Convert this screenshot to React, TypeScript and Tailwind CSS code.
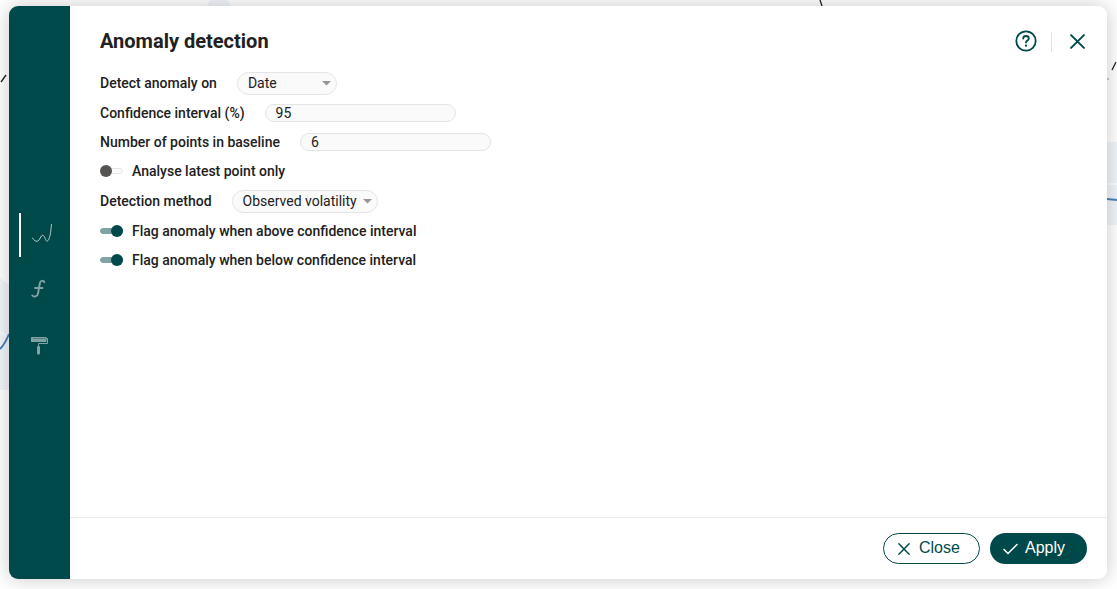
import { useState, type ReactNode } from "react";

const iconClass = "block shrink-0";

function TrendIcon() {
  return (
    <svg className={iconClass} width="22" height="22" viewBox="0 0 22 22" fill="none" stroke="#b5c9ca" strokeWidth="1" strokeLinecap="round">
      <path d="M1.500 14C2.500 16 4.500 17.700 6.500 17.200C9 16.500 9.500 11.300 11.700 11.300C14 11.500 14.500 17.500 16.300 17.200C18.500 16 20 9 20.500 -1" />
    </svg>
  );
}

function FunctionIcon() {
  return (
    <svg className={iconClass} width="22" height="22" viewBox="0 0 22 22" fill="none" stroke="#7fa3a4" strokeWidth="1.9" strokeLinecap="round">
      <path d="M13.300 3.200C12.600 1.300 9.500 1.200 8.900 4L7 14.500C6.400 17.800 2.800 18.400 1.300 16.500M4 9H11.500" />
    </svg>
  );
}

function RollerIcon() {
  return (
    <svg className={iconClass} width="22" height="22" viewBox="0 0 22 22" fill="none">
      <rect x="0" y="3" width="15.500" height="5" rx="0.500" fill="#7fa3a4" />
      <path d="M2 4.500H15" stroke="#4d7f80" />
      <path d="M15 4.500H16.500V9.500H7.500V12" stroke="#7fa3a4" />
      <rect x="6" y="12" width="3" height="8.500" rx="1" fill="#7fa3a4" />
    </svg>
  );
}

function CrossIcon({ size, weight }: { size: number; weight: number }) {
  return (
    <svg className={iconClass} width={size} height={size} viewBox="0 0 14 14" stroke="currentColor" strokeWidth={weight} strokeLinecap="round">
      <path d="M1 1L13 13M13 1L1 13" />
    </svg>
  );
}

function SideTab({ label, active, onClick, children }: { label: string; active: boolean; onClick: () => void; children: ReactNode }) {
  return (
    <button
      type="button"
      aria-label={label}
      aria-pressed={active}
      onClick={onClick}
      className={`flex h-11 items-center border-l-2 pl-2.5 ${active ? "border-white" : "border-transparent"}`}
    >
      {children}
    </button>
  );
}

function SelectRow({ id, label, width, options }: { id: string; label: string; width: string; options: string[] }) {
  return (
    <div className="flex h-6 items-center gap-5">
      <label htmlFor={id} className="font-medium">{label}</label>
      <div className={`relative ${width}`}>
        <select id={id} className="block h-[23px] w-full appearance-none rounded-full border border-[#e4e4e4] bg-[#fafafa] pl-2.5 pr-4 leading-5">
          {options.map((option) => (
            <option key={option}>{option}</option>
          ))}
        </select>
        <svg className="pointer-events-none absolute right-1.5 top-[9px]" width="9" height="5" viewBox="0 0 9 5">
          <path d="M0 0H9L4.500 4.500Z" fill="#969696" />
        </svg>
      </div>
    </div>
  );
}

function NumberRow({ id, label, value }: { id: string; label: string; value: string }) {
  return (
    <div className="flex h-[22px] items-center gap-5">
      <label htmlFor={id} className="font-medium">{label}</label>
      <input id={id} type="text" inputMode="numeric" defaultValue={value} className="h-[18px] w-[191px] rounded-full border border-[#e4e4e4] bg-[#fafafa] px-2.5 leading-4" />
    </div>
  );
}

function ToggleRow({ label, checked }: { label: string; checked?: boolean }) {
  return (
    <label className="flex h-[22px] items-center gap-[9px] font-medium">
      <input
        type="checkbox"
        role="switch"
        defaultChecked={checked}
        className="relative h-1.5 w-[23px] appearance-none rounded-full border border-[#e6e6e6] bg-[#fafafa] before:absolute before:-left-px before:-top-1 before:size-3 before:rounded-full before:bg-[#545352] checked:border-[#7fa3a4] checked:bg-[#7fa3a4] checked:before:left-2.5 checked:before:bg-[#00494b]"
      />
      {label}
    </label>
  );
}

function BackgroundChart() {
  return (
    <svg aria-hidden="true" className="absolute inset-0 size-full" viewBox="0 0 1117 589" preserveAspectRatio="none" fill="none">
      <path d="M207 6L210 0H228L231 6Z" fill="#f0f5f9" />
      <path d="M0 278L9 285V390H0Z" fill="#f0f5f9" />
      <path d="M0 332L9 338" stroke="#fbfcfd" strokeWidth="2" />
      <path d="M0 349Q5 344 9 334" stroke="#4682b8" strokeWidth="2" />
      <path d="M1107 142H1117V225H1107Z" fill="#f0f5f9" />
      <path d="M1107 184H1117" stroke="#fbfcfd" strokeWidth="2" />
      <path d="M1107 199L1117 200" stroke="#4682b8" strokeWidth="2" />
      <path d="M1 82L6 75M820 0L822 6M1112 70L1116 62" stroke="#222" strokeWidth="1.300" />
      <path d="M1107 79H1109" stroke="#999" />
    </svg>
  );
}

export default function App() {
  const [tab, setTab] = useState(0);

  return (
    <div className="relative flex min-h-screen bg-white pb-2.5 pl-[9px] pr-2.5 pt-1.5 font-['Roboto',sans-serif] text-sm text-[#212121]">
      <BackgroundChart />
      <section role="dialog" aria-labelledby="dialog-title" className="relative flex min-w-0 flex-1 overflow-hidden rounded-[9px] bg-white shadow-[0_0_20px_rgba(0,0,0,0.22)]">
        <nav className="flex w-[61px] shrink-0 flex-col gap-[11px] bg-[#00494b] pl-2.5 pt-[207px]">
          <SideTab label="Anomaly detection" active={tab === 0} onClick={() => setTab(0)}><TrendIcon /></SideTab>
          <SideTab label="Function" active={tab === 1} onClick={() => setTab(1)}><FunctionIcon /></SideTab>
          <SideTab label="Style" active={tab === 2} onClick={() => setTab(2)}><RollerIcon /></SideTab>
        </nav>
        <div className="flex min-w-0 flex-1 flex-col">
          <header className="flex h-[65px] items-center justify-between pl-[30px] pr-[22px] pt-1.5">
            <h1 id="dialog-title" className="pb-0.5 text-xl font-bold">Anomaly detection</h1>
            <div className="flex items-center text-[#00494b]">
              <button type="button" aria-label="Help" className="pb-0.5">
                <svg className={iconClass} width="22" height="22" viewBox="0 0 22 22" fill="none" stroke="currentColor" strokeWidth="1.800" strokeLinecap="round" strokeLinejoin="round">
                  <circle cx="11" cy="11" r="9.700" />
                  <path d="M8.200 8.500C8.200 6.800 9.400 6 11 6C12.700 6 13.800 7 13.800 8.400C13.800 10.500 11 10.500 11 12.500" />
                  <circle cx="11" cy="15.700" r="1.100" fill="currentColor" stroke="none" />
                </svg>
              </button>
              <span className="ml-3.5 mr-[18px] h-5 w-px bg-[#e0e3e5]" />
              <button type="button" aria-label="Close dialog"><CrossIcon size={15} weight={1.8} /></button>
            </div>
          </header>
          <main className="flex flex-1 flex-col items-start gap-[7px] pl-[30px]">
            <SelectRow id="field" label="Detect anomaly on" width="w-[100px]" options={["Date"]} />
            <NumberRow id="confidence" label="Confidence interval (%)" value="95" />
            <NumberRow id="baseline" label="Number of points in baseline" value="6" />
            <ToggleRow label="Analyse latest point only" />
            <SelectRow id="method" label="Detection method" width="w-[146px]" options={["Observed volatility"]} />
            <ToggleRow label="Flag anomaly when above confidence interval" checked />
            <ToggleRow label="Flag anomaly when below confidence interval" checked />
          </main>
          <footer className="flex justify-end gap-2.5 border-t border-[#e9ebec] px-5 py-[15px] font-['Liberation_Sans',sans-serif] text-base">
            <button type="button" className="flex h-[31px] w-[97px] items-center gap-[9px] rounded-full border border-[#00494b] bg-white pl-3.5 text-[#00494b]">
              <CrossIcon size={12} weight={1.7} />
              <span className="pb-0.5">Close</span>
            </button>
            <button type="button" className="flex h-[31px] w-[97px] items-center gap-[7px] rounded-full bg-[#00494b] pl-[13px] text-white">
              <svg className={iconClass} width="15" height="12" viewBox="0 0 15 12" fill="none" stroke="currentColor" strokeWidth="1.500" strokeLinecap="round" strokeLinejoin="round">
                <path d="M1 6.500L5 10.500L14 1.500" />
              </svg>
              <span className="pb-0.5">Apply</span>
            </button>
          </footer>
        </div>
      </section>
    </div>
  );
}
